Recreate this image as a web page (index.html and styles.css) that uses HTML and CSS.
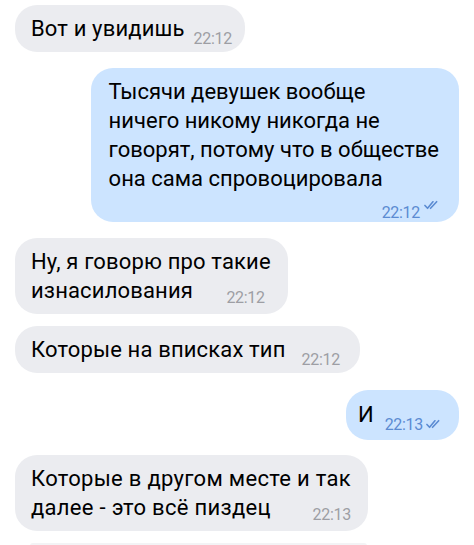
FILE: index.html
```html
<!DOCTYPE html>
<html lang="ru">
<head>
  <meta charset="UTF-8">
  <title>Чат</title>
  <link rel="stylesheet" href="styles.css">
</head>
<body>

  <div class="chat">

    <div class="msg in first">
      <span class="text">Вот и увидишь</span><span class="time">22:12</span>
    </div>

    <div class="msg out big">
      <div class="text">Тысячи девушек вообще<br>ничего никому никогда не<br>говорят, потому что в обществе<br>она сама спровоцировала</div>
      <div class="meta"><span class="time">22:12</span><svg class="ticks" viewBox="0 0 16 10"><path d="M1 5.5 L3.8 8.5 L9.5 1.5 M7 8.5 L13.5 1.5"/></svg></div>
    </div>

    <div class="msg in multi">
      <span class="text">Ну, я говорю про такие<br>изнасилования</span><span class="stamp">22:12</span>
    </div>

    <div class="msg in same spaced">
      <span class="text">Которые на вписках тип</span><span class="time">22:12</span>
    </div>

    <div class="msg out short">
      <span class="text">И</span><span class="time">22:13</span><svg class="ticks" viewBox="0 0 16 10"><path d="M1 5.5 L3.8 8.5 L9.5 1.5 M7 8.5 L13.5 1.5"/></svg>
    </div>

    <div class="msg in multi wide">
      <span class="text">Которые в другом месте и так<br>далее - это всё пиздец</span><span class="stamp">22:13</span>
    </div>

    <div class="msg in same next"></div>

  </div>

</body>
</html>
```

FILE: styles.css
```css
body {
  margin: 0;
  background: #ffffff;
  font-family: Roboto, "Noto Sans", sans-serif;
  color: #000;
}

.chat {
  display: flex;
  flex-direction: column;
  padding: 5px 15px 0 15px;
}

.msg {
  max-width: 380px;
  padding: 9px 13px 9px 16px;
  border-radius: 22px;
  font-size: 22px;
  line-height: 29px;
  margin-top: 16px;
}

.msg.first {
  margin-top: 0;
}

.msg.same {
  margin-top: 12px;
}

.in {
  align-self: flex-start;
  background: #ebecf0;
  letter-spacing: 0.15px;
}

.out {
  align-self: flex-end;
  background: #cce4ff;
}

.time {
  font-size: 16px;
  letter-spacing: -0.3px;
  line-height: 0;
  vertical-align: -8px;
  margin-left: 9px;
  color: #9d9ea4;
}

.out .time {
  color: #5b8bd2;
}

.stamp {
  float: right;
  font-size: 16px;
  letter-spacing: -0.3px;
  line-height: 12px;
  margin: 16px 6px 0 12px;
  color: #9d9ea4;
}

.ticks {
  width: 15px;
  height: 10px;
  margin-left: 3px;
  vertical-align: -7px;
  fill: none;
  stroke: #5b8bd2;
  stroke-width: 1.7;
  stroke-linecap: round;
  stroke-linejoin: round;
}

.multi {
  padding-right: 17px;
}

.spaced {
  padding-right: 20px;
}

.spaced .time {
  margin-left: 16px;
}

.wide {
  margin-top: 15px;
  letter-spacing: 0.3px;
}

.wide .stamp {
  letter-spacing: -0.3px;
  margin-right: 0;
}

.big {
  padding: 9px 20px 9px 18px;
}

.meta {
  text-align: right;
  line-height: 18px;
  margin-top: 1px;
}

.meta .ticks {
  margin-left: 4px;
  vertical-align: 0;
}

.short {
  margin-top: 17px;
  padding: 10px 18px 11px 12px;
}

.short .time {
  margin-left: 11px;
}

.next {
  margin-left: 15px;
  width: 337px;
  height: 3px;
  padding: 0;
  margin-top: 10px;
  border-radius: 22px 22px 0 0;
  background: #f3f3f5;
}
```
